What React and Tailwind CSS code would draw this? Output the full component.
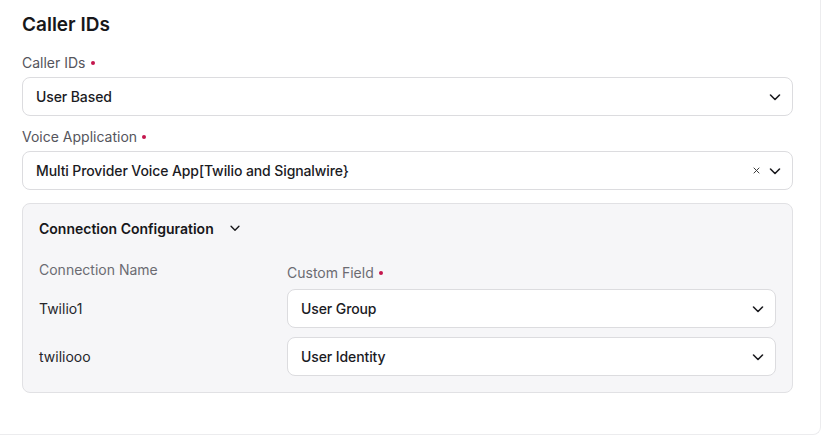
import React from 'react';

const Chevron = ({ className = '' }) => (
  <svg viewBox="0 0 16 16" className={className} fill="none" stroke="currentColor" strokeWidth="1.6" strokeLinecap="round" strokeLinejoin="round">
    <path d="M3.5 6l4.5 4.5L12.5 6" />
  </svg>
);

const Cross = () => (
  <svg viewBox="0 0 16 16" className="w-[9px] h-[9px]" fill="none" stroke="currentColor" strokeWidth="1.7" strokeLinecap="round">
    <path d="M3.5 3.5l9 9M12.5 3.5l-9 9" />
  </svg>
);

const Required = () => <span className="ml-[5px] inline-block w-[4px] h-[4px] rounded-full bg-[#c4164d] align-middle relative -top-[1px]" />;

const Select = ({ value, clearable }) => (
  <div className="h-[39px] flex items-center bg-white border border-[#dcdcdf] rounded-lg pl-[13px] pr-[9px]">
    <span className="flex-1 text-[14px] text-[#1b1b1f] font-medium tracking-[-0.1px] truncate">{value}</span>
    {clearable && <span className="text-[#333] mr-[6px] flex items-center"><Cross /></span>}
    <Chevron className="w-[16px] h-[16px] text-[#1b1b1f]" />
  </div>
);

const ROWS = [
  { name: 'Twilio1', field: 'User Group' },
  { name: 'twiliooo', field: 'User Identity' }
];

export default function App() {
  return (
    <div className="h-[435px] w-[821px] bg-white border-b border-r border-[#ececee] rounded-br-lg" style={{ fontFamily: 'Inter, "Noto Sans", sans-serif' }}>
      <div className="pl-[22px] pr-[27px] pt-[12px]">
        <h1 className="text-[19px] font-semibold text-[#17171a] leading-[26px]">Caller IDs</h1>

        <div className="mt-[16px] text-[14px] text-[#55555c] leading-[18px] mb-[5px]">
          Caller IDs<Required />
        </div>
        <Select value="User Based" />

        <div className="mt-[12px] text-[14px] text-[#55555c] leading-[18px] mb-[5px]">
          Voice Application<Required />
        </div>
        <Select value="Multi Provider Voice App[Twilio and Signalwire}" clearable />

        {/* Connection Configuration */}
        <div className="mt-[13px] bg-[#f6f6f8] border border-[#e1e1e4] rounded-lg pl-[16px] pr-[16px] pt-[14px] pb-[16px]">
          <div className="flex items-center h-[20px]">
            <span className="text-[14px] font-semibold text-[#17171a]">Connection Configuration</span>
            <Chevron className="w-[14px] h-[14px] ml-[14px] text-[#17171a]" />
          </div>
          <div className="mt-[23px] grid grid-cols-[248px_1fr] items-end">
            <div className="text-[14px] text-[#6b6b72] leading-[18px] pb-[1px]">Connection Name</div>
            <div className="text-[14px] text-[#6b6b72] leading-[18px] -mb-[2px]">
              Custom Field<Required />
            </div>
          </div>
          <div className="mt-[9px] flex flex-col gap-[9px]">
            {ROWS.map(r => (
              <div key={r.name} className="grid grid-cols-[248px_1fr] items-center">
                <div className="text-[14px] text-[#26262b]">{r.name}</div>
                <Select value={r.field} />
              </div>
            ))}
          </div>
        </div>
      </div>
    </div>
  );
}
